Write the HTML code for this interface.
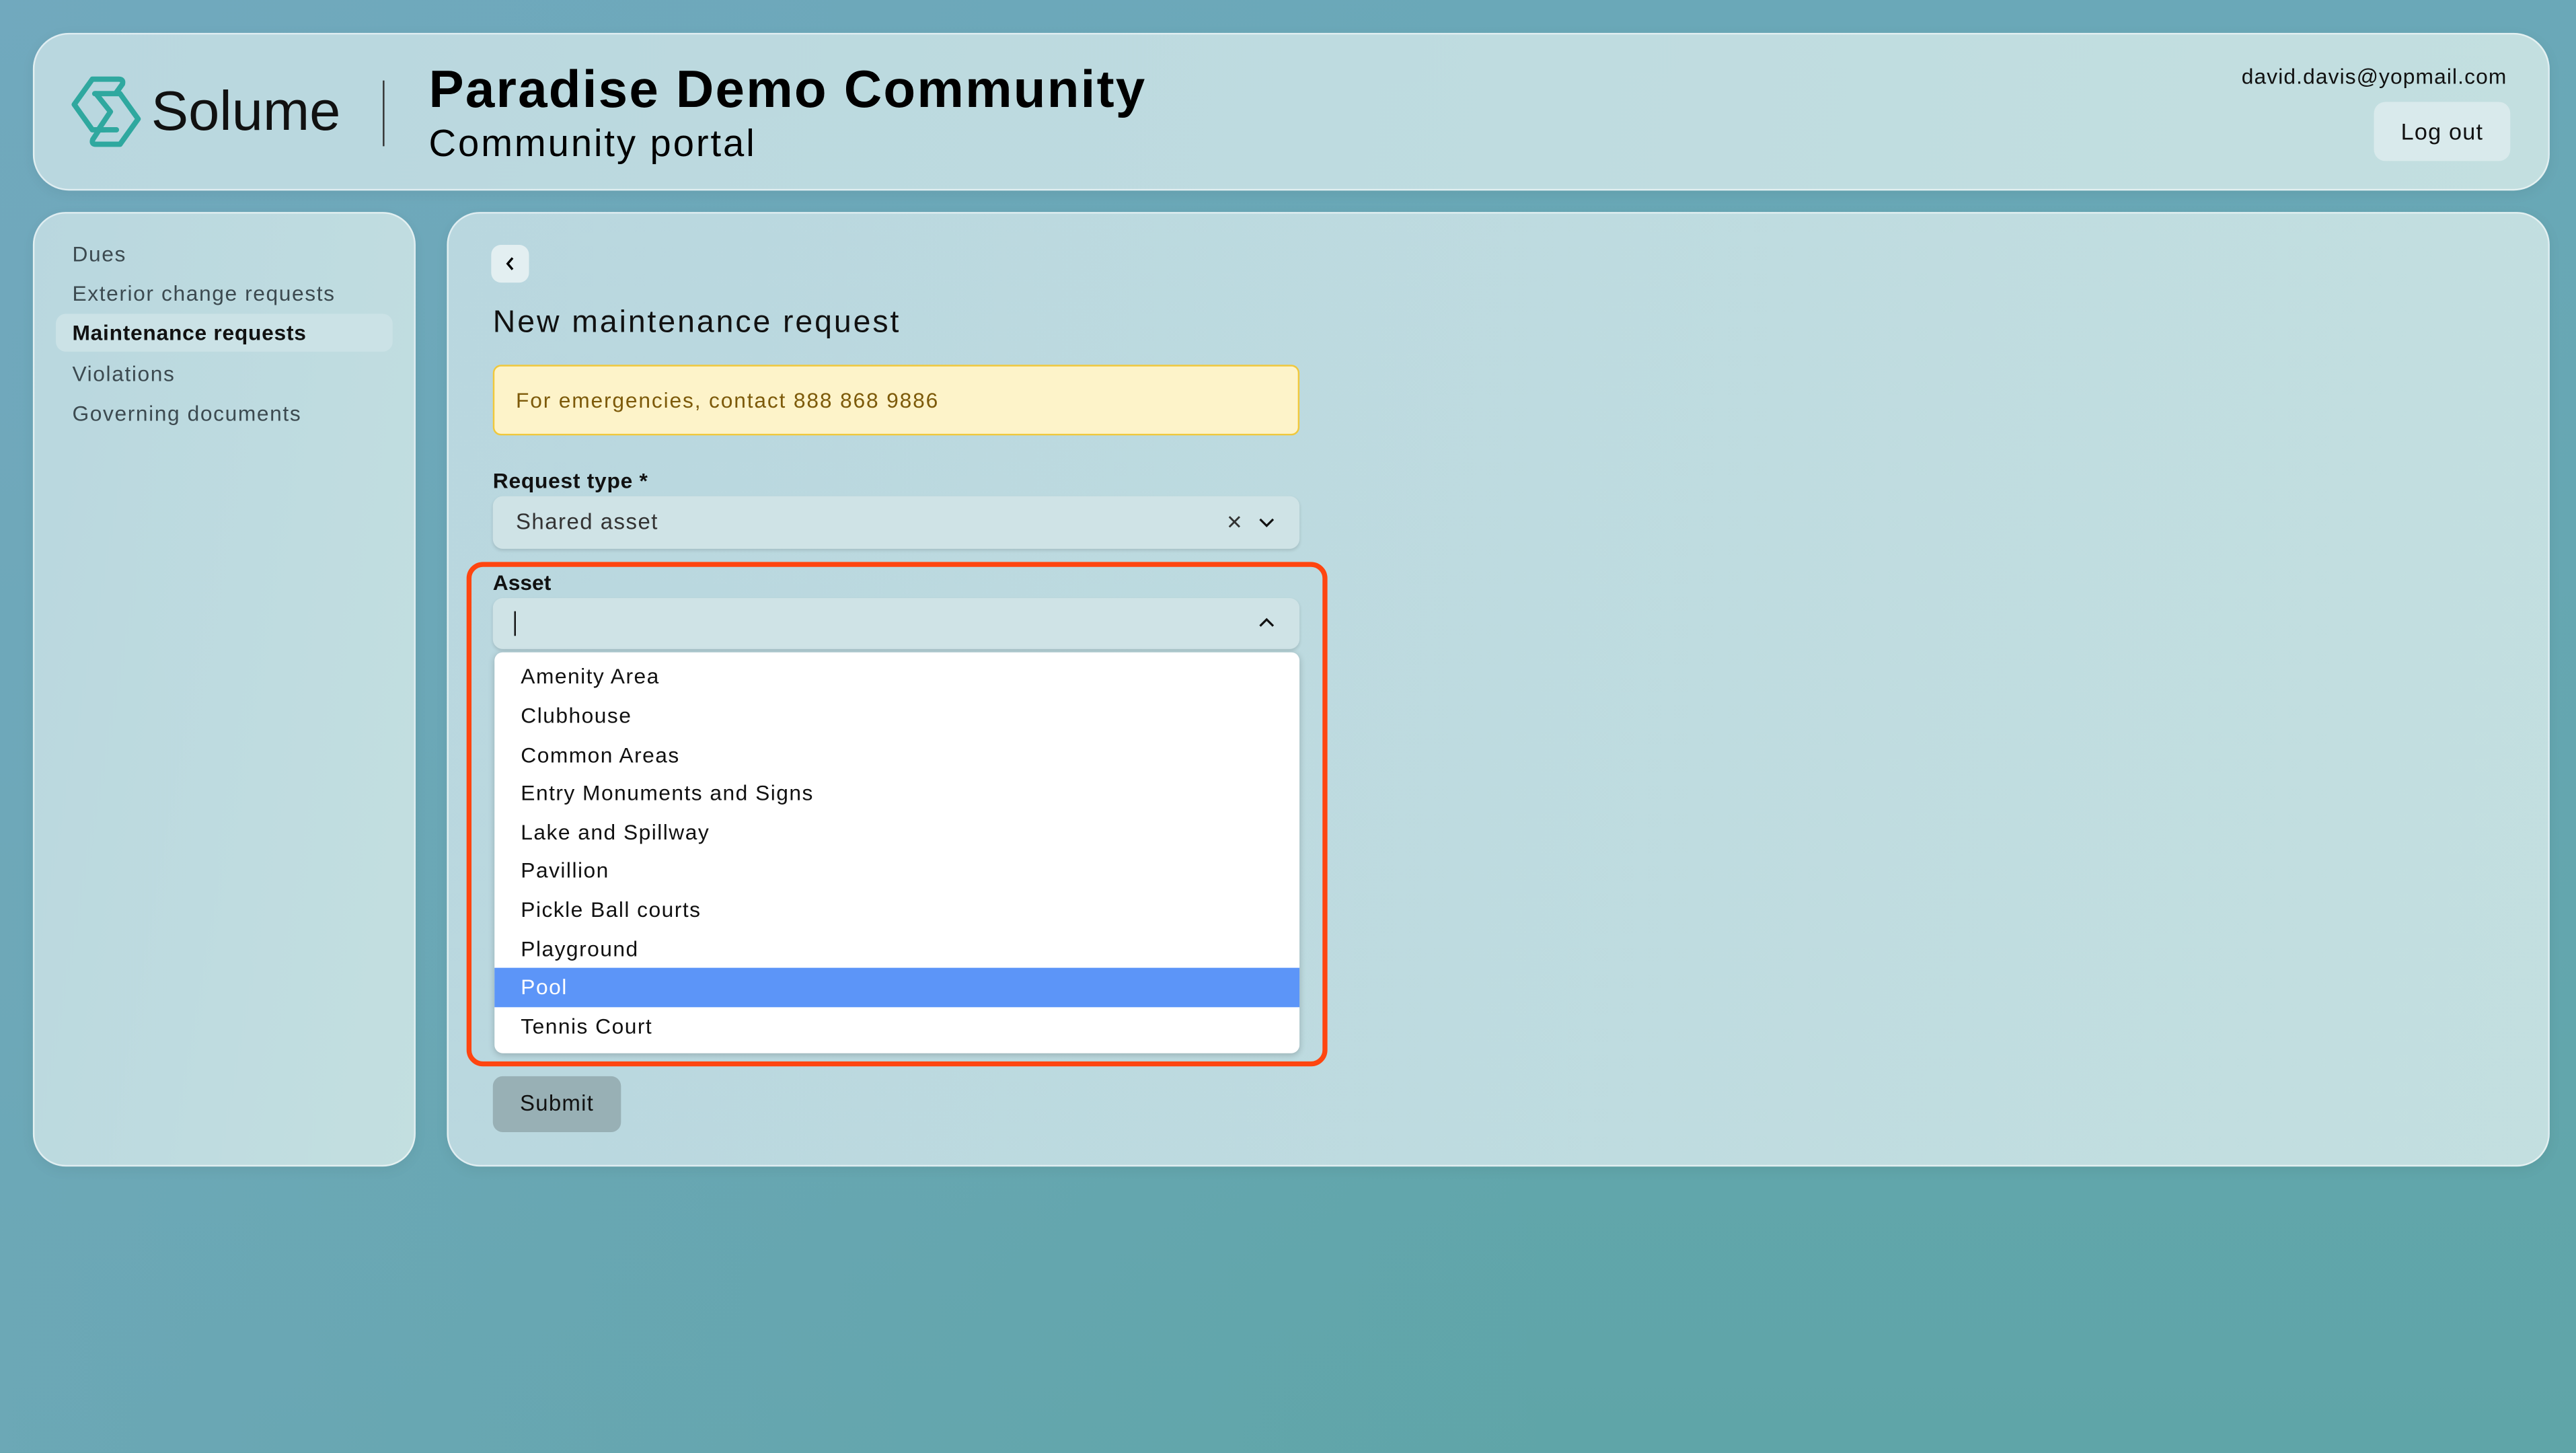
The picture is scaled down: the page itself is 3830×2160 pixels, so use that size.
<!DOCTYPE html>
<html><head><meta charset="utf-8"><style>
html,body{margin:0;padding:0;width:3830px;height:2160px;overflow:hidden}
body{background:linear-gradient(160deg,#78acc0 0%,#6aa8b6 40%,#5ea7a8 100%);font-family:"Liberation Sans",sans-serif;color:#111}
#s{position:absolute;left:0;top:0;width:1568px;height:884px;transform:scale(2.4426);transform-origin:0 0;
background:linear-gradient(90deg,rgba(120,170,195,.5),rgba(90,165,165,0) 60%),linear-gradient(180deg,#6aa8b8,#5fa5a8)}
.card{position:absolute;background:linear-gradient(100deg,#b9d7df,#c3dfe0);border:1px solid rgba(255,255,255,.55);box-sizing:border-box;box-shadow:0 2px 8px rgba(0,0,0,.06)}
.abs{position:absolute}
.nav div{position:absolute;left:23px;font-size:13px;color:#3c4a50;letter-spacing:.65px}
.btn{background:#e3eff1;border-radius:6px;position:absolute}
.item{position:absolute;left:16px;font-size:13px;color:#111;letter-spacing:.6px}
</style></head><body><div id="s">
<div class="card" style="left:20px;top:20px;width:1532px;height:96px;border-radius:22px">
<svg class="abs" style="left:22px;top:25px" width="44" height="44" viewBox="5 5 30 30" fill="none" stroke="#2fa89f" stroke-width="2.2" stroke-linecap="round" stroke-linejoin="round">
<path d="M24 12 L26.5 8.5 Q27 6.5 25 6.5 H14 L6.5 17 L14 27.5 H19"/>
<path d="M15 12.5 H25.5 L33 23 L25.5 33.5 H15.5 Q13.5 33.5 14.2 31.5 L16.5 28"/>
<path d="M15.5 12.5 L21.5 20 L16.5 27.5 H24"/>
</svg>
<div class="abs" style="left:71px;top:28px;font-size:34px;color:#111">Solume</div>
<div class="abs" style="left:212px;top:28px;width:1px;height:40px;background:#333"></div>
<div class="abs" style="left:240px;top:15px;font-size:32px;font-weight:bold;color:#000;letter-spacing:.9px">Paradise Demo Community</div>
<div class="abs" style="left:240px;top:53px;font-size:23px;color:#000;letter-spacing:1.2px">Community portal</div>
<div class="abs" style="right:25px;top:18px;font-size:13px;color:#111;letter-spacing:.45px">david.davis@yopmail.com</div>
<div class="btn" style="left:1424px;top:41px;width:83px;height:36px;border-radius:7px;background:#d9eaec;font-size:14px;text-align:center;line-height:36px;letter-spacing:.5px">Log out</div>
</div>
<div class="card nav" style="left:20px;top:129px;width:233px;height:581px;border-radius:20px">
<div style="top:17px">Dues</div>
<div style="top:41px">Exterior change requests</div>
<div style="left:13px;top:61px;width:205px;height:23px;background:#cbe2e6;border-radius:6px"></div>
<div style="top:65px;color:#111;font-weight:bold;letter-spacing:.3px">Maintenance requests</div>
<div style="top:90px">Violations</div>
<div style="top:114px">Governing documents</div>
</div>
<div class="card" style="left:272px;top:129px;width:1280px;height:581px;border-radius:20px">
<div class="btn" style="left:26px;top:19px;width:23px;height:23px;border-radius:6px">
<svg width="23" height="23" viewBox="0 0 23 23"><path d="M13 8 L10 11.5 L13 15" fill="none" stroke="#000" stroke-width="1.4"/></svg></div>
<div class="abs" style="left:27px;top:56px;font-size:19px;color:#111;letter-spacing:1.2px">New maintenance request</div>
<div class="abs" style="left:27px;top:92px;width:491px;height:43px;background:#fdf3c9;border:1px solid #f0c83c;box-sizing:border-box;border-radius:5px;font-size:13px;color:#7d5a0a;line-height:41px;padding-left:13px;letter-spacing:.75px">For emergencies, contact 888 868 9886</div>
<div class="abs" style="left:27px;top:155px;font-size:13px;font-weight:bold;letter-spacing:.3px">Request type *</div>
<div class="abs" style="left:27px;top:172px;width:491px;height:32px;background:#cfe3e6;border-radius:6px;box-shadow:0 1px 2px rgba(0,0,0,.12);font-size:13.5px;color:#333;line-height:32px;padding-left:14px;box-sizing:border-box;letter-spacing:.6px">Shared asset
<span class="abs" style="right:34px;top:0;font-size:12px">✕</span>
<svg class="abs" style="right:15px;top:11px" width="10" height="10" viewBox="0 0 10 10"><path d="M1 3 L5 7 L9 3" fill="none" stroke="#111" stroke-width="1.3"/></svg></div>
<div class="abs" style="left:11px;top:212px;width:524px;height:307px;border:3px solid #ff4510;border-radius:10px;box-sizing:border-box"></div>
<div class="abs" style="left:27px;top:217px;font-size:13px;font-weight:bold">Asset</div>
<div class="abs" style="left:27px;top:234px;width:491px;height:31px;background:#cfe3e6;border-radius:6px;box-shadow:0 1px 2px rgba(0,0,0,.12)">
<div class="abs" style="left:13px;top:8px;width:1px;height:15px;background:#111"></div>
<svg class="abs" style="right:15px;top:10px" width="10" height="10" viewBox="0 0 10 10"><path d="M1 7 L5 3 L9 7" fill="none" stroke="#111" stroke-width="1.3"/></svg></div>
<div class="abs" style="left:28px;top:267px;width:490px;height:244px;background:#fff;border-radius:5px;box-shadow:0 1px 4px rgba(0,0,0,.2)">
<div class="abs" style="left:0;top:192px;width:490px;height:24px;background:#5c95f8"></div>
<div class="item" style="top:7px">Amenity Area</div>
<div class="item" style="top:31px">Clubhouse</div>
<div class="item" style="top:55px">Common Areas</div>
<div class="item" style="top:78px">Entry Monuments and Signs</div>
<div class="item" style="top:102px">Lake and Spillway</div>
<div class="item" style="top:125px">Pavillion</div>
<div class="item" style="top:149px">Pickle Ball courts</div>
<div class="item" style="top:173px">Playground</div>
<div class="item" style="top:196px;color:#fff">Pool</div>
<div class="item" style="top:220px">Tennis Court</div>
</div>
<div class="abs" style="left:27px;top:525px;width:78px;height:34px;background:#98b0b5;border-radius:6px;font-size:13.5px;text-align:center;line-height:34px;color:#111;letter-spacing:.5px">Submit</div>
</div>
</div></body></html>
